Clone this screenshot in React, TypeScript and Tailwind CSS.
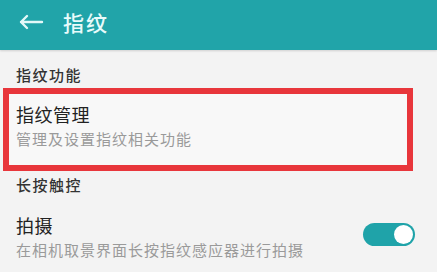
import React from "react";

export default function App() {
  const font = { fontFamily: '"Noto Sans CJK SC", "Noto Sans", sans-serif' };
  return (
    <div className="w-[437px] h-[272px] overflow-hidden bg-[#f3f3f3]" style={font}>
      <div className="h-[50px] bg-[#21a4a9] flex items-center pb-[7px] shadow-[0_1px_2px_rgba(0,0,0,0.15)]">
        <svg width="26" height="16" viewBox="0 0 26 16" className="ml-[18px]" fill="none">
          <path d="M24 8H3 M9 2L3 8l6 6" stroke="#e3f8f8" strokeWidth="2.4" strokeLinecap="round" strokeLinejoin="round" />
        </svg>
        <div className="ml-[19px] text-[21px] leading-[28px] tracking-[2px] text-[#e8fbfb] font-medium">指纹</div>
      </div>
      <div className="pt-[15px] pl-4 text-[15px] leading-[20px] tracking-[1.5px] text-[#333] font-medium">指纹功能</div>
      <div className="mt-[3px] ml-[3px] w-[410px] h-[83px] border-[6px] border-[#e8363b] bg-[#f8f8f8] pl-[7px] pt-[8px]">
        <div className="text-[18px] leading-[24px] tracking-[0.5px] text-[#222]">指纹管理</div>
        <div className="mt-[3px] text-[15px] leading-[20px] tracking-[1px] text-[#9a9a9a]">管理及设置指纹相关功能</div>
      </div>
      <div className="mt-[4px] pl-4 text-[15px] leading-[20px] tracking-[1.5px] text-[#333] font-medium">长按触控</div>
      <div className="mt-[18px] pl-4 pr-[22px] flex justify-between items-start">
        <div>
          <div className="text-[18px] leading-[24px] tracking-[0.5px] text-[#222]">拍摄</div>
          <div className="mt-[3px] text-[15px] leading-[20px] tracking-[1px] text-[#9a9a9a]">在相机取景界面长按指纹感应器进行拍摄</div>
        </div>
        <div className="mt-[10px] w-[52px] h-[23px] rounded-full bg-[#1fa3a9] flex items-center justify-end pr-[2px]">
          <div className="w-[19px] h-[19px] rounded-full bg-white" />
        </div>
      </div>
    </div>
  );
}
